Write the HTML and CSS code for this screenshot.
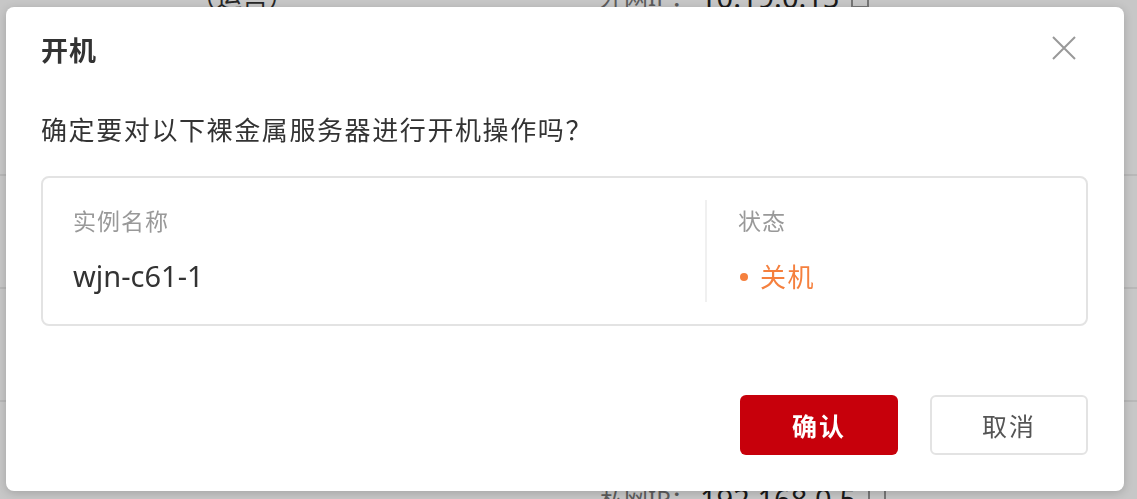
FILE: index.html
```html
<!DOCTYPE html>
<html lang="zh-CN">
<head>
    <meta charset="UTF-8">
    <meta name="viewport" content="width=device-width, initial-scale=1.0">
    <title>开机 - 裸金属服务器</title>
    <link rel="stylesheet" href="styles.css">
</head>
<body>
    <div class="page">
        <div class="bg-top">
            <span class="bg-tag">（运营）</span>
            <span class="bg-ip"><span class="bg-label">外网IP：</span><span class="bg-value">10.19.0.15</span><span class="bg-copy"></span></span>
        </div>
        <div class="bg-row"></div>
        <div class="bg-row"></div>
        <div class="bg-row bg-last">
            <span class="bg-ip"><span class="bg-label">私网IP：</span><span class="bg-value">192.168.0.5</span><span class="bg-copy"></span></span>
        </div>
    </div>

    <div class="mask"></div>

    <div class="modal">
        <div class="modal-header">
            <h2>开机</h2>
            <button class="close" type="button" aria-label="关闭">
                <svg width="24" height="24" viewBox="0 0 24 24">
                    <path d="M1 1 L23 23 M23 1 L1 23" stroke="#999" stroke-width="2" fill="none"/>
                </svg>
            </button>
        </div>

        <p class="message">确定要对以下裸金属服务器进行开机操作吗？</p>

        <div class="info-box">
            <div class="info-col name-col">
                <div class="info-label">实例名称</div>
                <div class="info-value">wjn-c61-1</div>
            </div>
            <div class="info-col status-col">
                <div class="info-label">状态</div>
                <div class="info-value status-off"><span class="dot"></span>关机</div>
            </div>
        </div>

        <div class="modal-footer">
            <button class="btn btn-primary" type="button">确认</button>
            <button class="btn btn-default" type="button">取消</button>
        </div>
    </div>
</body>
</html>
```

FILE: styles.css
```css
body {
    margin: 0;
    padding: 0;
    background-color: #fff;
    font-family: "Noto Sans", "Noto Sans CJK SC", sans-serif;
    color: #333;
    overflow: hidden;
    height: 499px;
}

/* page behind the dialog */
.page {
    display: flex;
    flex-direction: column;
}

.bg-top {
    height: 176px;
    position: relative;
    border-bottom: 2px solid #ececec;
    box-sizing: border-box;
}

.bg-tag {
    position: absolute;
    top: -20px;
    left: 190px;
    font-size: 26px;
    line-height: 34px;
}

.bg-top .bg-ip {
    position: absolute;
    top: -20px;
    left: 600px;
}

.bg-ip {
    display: flex;
    align-items: center;
    line-height: 34px;
}

.bg-label {
    font-size: 24px;
    color: #777;
    width: 100px;
}

.bg-value {
    font-size: 29px;
    color: #222;
}

.bg-copy {
    width: 14px;
    height: 20px;
    margin-left: 12px;
    border: 2px solid #999;
    border-top: none;
}

.bg-row {
    height: 113px;
    border-bottom: 2px solid #ececec;
    box-sizing: border-box;
}

.bg-last {
    padding: 80px 0 0 600px;
    border-bottom: none;
}

.mask {
    position: fixed;
    top: 0;
    left: 0;
    right: 0;
    bottom: 0;
    background-color: rgba(0, 0, 0, 0.22);
}

/* dialog */
.modal {
    position: absolute;
    top: 7px;
    left: 6px;
    width: 1118px;
    height: 484px;
    box-sizing: border-box;
    padding: 28px 36px 36px 35px;
    background-color: #fff;
    border-radius: 8px;
    box-shadow: 0 2px 10px rgba(0, 0, 0, 0.18);
    display: flex;
    flex-direction: column;
}

.modal-header {
    display: flex;
    justify-content: space-between;
    align-items: center;
    height: 30px;
    padding-right: 12px;
}

.modal-header h2 {
    margin: 0;
    font-family: "Noto Sans CJK SC", sans-serif;
    font-size: 27px;
    line-height: 30px;
    letter-spacing: 1px;
    font-weight: bold;
    color: #333;
}

.close {
    width: 24px;
    height: 24px;
    padding: 0;
    border: none;
    background: none;
    cursor: pointer;
    margin-top: -4px;
}

.close svg {
    display: block;
}

.message {
    margin: 49px 0 32px;
    font-family: "Noto Sans CJK SC", sans-serif;
    font-size: 26px;
    line-height: 30px;
    letter-spacing: 1.6px;
    color: #333;
}

.info-box {
    display: flex;
    height: 150px;
    box-sizing: border-box;
    padding: 22px 0;
    border: 2px solid #e3e3e3;
    border-radius: 8px;
}

.info-col {
    padding: 6px 30px;
    box-sizing: border-box;
}

.name-col {
    width: 662px;
}

.status-col {
    flex: 1;
    border-left: 2px solid #f0f0f0;
    padding-left: 31px;
}

.info-label {
    font-family: "Noto Sans CJK SC", sans-serif;
    font-size: 23px;
    line-height: 28px;
    letter-spacing: 1px;
    color: #999;
}

.info-value {
    margin-top: 24px;
    font-size: 29px;
    line-height: 36px;
    color: #333;
}

.status-off {
    display: flex;
    align-items: center;
    font-family: "Noto Sans CJK SC", sans-serif;
    font-size: 26px;
    letter-spacing: 1.5px;
    color: #f5803e;
}

.dot {
    width: 8px;
    height: 8px;
    margin: 2px 12px 0 2px;
    border-radius: 50%;
    background-color: #f5803e;
}

.modal-footer {
    display: flex;
    justify-content: flex-end;
    gap: 32px;
    margin-top: 69px;
}

.btn {
    width: 158px;
    height: 60px;
    border-radius: 6px;
    font-family: "Noto Sans CJK SC", sans-serif;
    font-size: 25px;
    letter-spacing: 2px;
    cursor: pointer;
}

.btn-primary {
    color: #fff;
    font-weight: bold;
    background-color: #c7000b;
    border: none;
}

.btn-default {
    color: #555;
    background-color: #fff;
    border: 2px solid #e3e3e3;
}
```
